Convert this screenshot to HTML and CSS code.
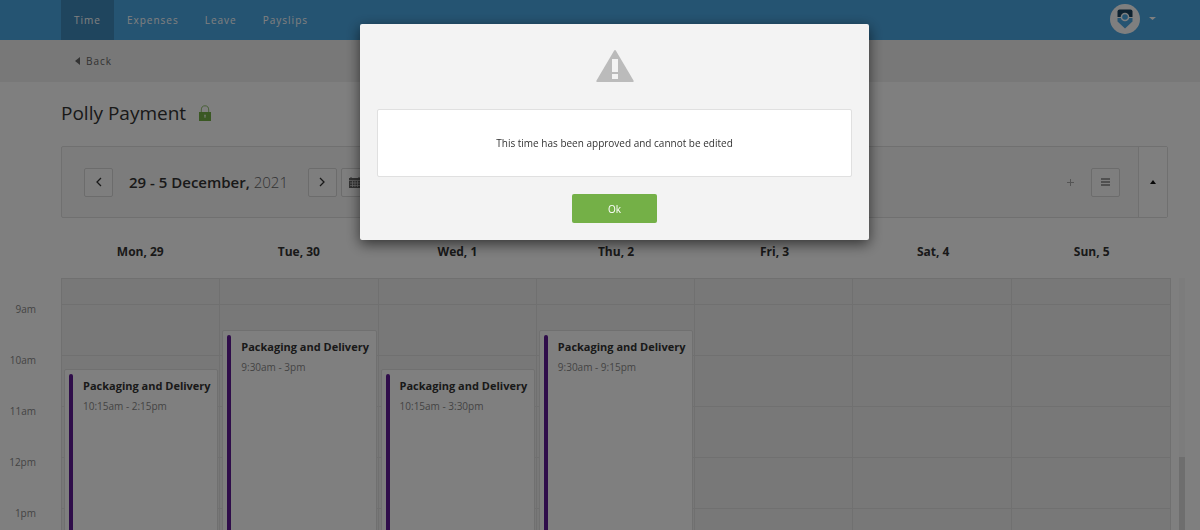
FILE: index.html
```
<!DOCTYPE html>
<html lang="en">
<head>
    <meta charset="UTF-8">
    <meta name="viewport" content="width=device-width, initial-scale=1.0">
    <title>Timesheet - Polly Payment</title>
    <link rel="stylesheet" href="styles.css">
</head>
<body>
    <header class="topbar">
        <nav class="nav">
            <a href="#" class="nav-link active">Time</a>
            <a href="#" class="nav-link">Expenses</a>
            <a href="#" class="nav-link">Leave</a>
            <a href="#" class="nav-link">Payslips</a>
        </nav>
        <button class="account" type="button" aria-label="Account menu">
            <svg class="avatar" viewBox="0 0 30 30" aria-hidden="true">
                <circle cx="15" cy="15" r="15" fill="#fff"/>
                <path d="M7.500 13V7.500q0-2 2-2h11q2 0 2 2V13z" fill="#1c4560"/>
                <path d="M7.500 14h15v3.500L15 24.500l-7.500-7z" fill="#4ba8e4"/>
                <circle cx="15" cy="13" r="4.300" fill="#fff"/>
                <circle cx="15" cy="13" r="2.800" fill="#4ba8e4"/>
            </svg>
            <svg class="caret" viewBox="0 0 7 3" aria-hidden="true"><path d="M0 0h7L3.500 3z" fill="#fff"/></svg>
        </button>
    </header>

    <div class="subbar">
        <a href="#" class="back">
            <svg viewBox="0 0 5 8" aria-hidden="true"><path d="M5 0v8L0 4z" fill="currentColor"/></svg>
            Back
        </a>
    </div>

    <main class="page">
        <div class="title-row">
            <h1>Polly Payment</h1>
            <svg class="lock" viewBox="0 0 12 16" aria-label="Approved" role="img">
                <path d="M2.300 7.500V5a3.700 4.200 0 0 1 7.400 0v2.500" fill="none" stroke="#74b047" stroke-width=".8"/>
                <rect y="7" width="12" height="9" fill="#74b047"/>
                <path d="M6 9.500a1.200 1.200 0 0 1 .5 2.200V13H5.500v-1.300A1.200 1.200 0 0 1 6 9.500z" fill="#d5e7c8"/>
            </svg>
        </div>

        <!-- Week picker -->
        <section class="toolbar">
            <div class="toolbar-main">
                <button class="square" type="button" aria-label="Previous week">
                    <svg width="6" height="10" viewBox="0 0 6 10"><path d="M5 1L1 5l4 4" fill="none" stroke="#333" stroke-width="1.300"/></svg>
                </button>
                <h2 class="range">29 - 5 December, <span>2021</span></h2>
                <button class="square" type="button" aria-label="Next week">
                    <svg width="6" height="10" viewBox="0 0 6 10"><path d="M1 1l4 4-4 4" fill="none" stroke="#333" stroke-width="1.300"/></svg>
                </button>
                <button class="square calendar-button" type="button" aria-label="Pick a date">
                    <svg width="12" height="11" viewBox="0 0 12 11">
                        <path d="M0 1h12v10H0z" fill="#666"/>
                        <path d="M2 0v2M10 0v2" stroke="#666"/>
                        <path d="M0 3.500h12M1 6h10M1 8.500h10M3.500 4v6M6 4v6M8.500 4v6" stroke="#ddd" stroke-width=".7"/>
                    </svg>
                </button>
                <button class="square plain" type="button" aria-label="Add time">
                    <svg width="9" height="9" viewBox="0 0 9 9"><path d="M4.500 1v7M1 4.500h7" stroke="#aaa" stroke-width="1"/></svg>
                </button>
                <button class="square" type="button" aria-label="List view">
                    <svg width="9" height="8" viewBox="0 0 9 8"><path d="M0 1h9M0 4h9M0 7h9" stroke="#444" stroke-width="1"/></svg>
                </button>
            </div>
            <button class="collapse" type="button" aria-label="Collapse">
                <svg width="6" height="4" viewBox="0 0 6 4"><path d="M3 0l3 4H0z" fill="#111"/></svg>
            </button>
        </section>
    </main>

    <div class="days">
        <span>Mon, 29</span>
        <span>Tue, 30</span>
        <span>Wed, 1</span>
        <span>Thu, 2</span>
        <span>Fri, 3</span>
        <span>Sat, 4</span>
        <span>Sun, 5</span>
    </div>

    <section class="calendar">
        <div class="hours">
            <span>9am</span>
            <span>10am</span>
            <span>11am</span>
            <span>12pm</span>
            <span>1pm</span>
        </div>
        <div class="week">
            <div class="day">
                <article class="event from-1015">
                    <h3>Packaging and Delivery</h3>
                    <p>10:15am - 2:15pm</p>
                </article>
            </div>
            <div class="day">
                <article class="event from-0930">
                    <h3>Packaging and Delivery</h3>
                    <p>9:30am - 3pm</p>
                </article>
            </div>
            <div class="day">
                <article class="event from-1015">
                    <h3>Packaging and Delivery</h3>
                    <p>10:15am - 3:30pm</p>
                </article>
            </div>
            <div class="day">
                <article class="event from-0930">
                    <h3>Packaging and Delivery</h3>
                    <p>9:30am - 9:15pm</p>
                </article>
            </div>
            <div class="day"></div>
            <div class="day"></div>
            <div class="day"></div>
        </div>
        <div class="scrollbar"><div class="thumb"></div></div>
    </section>

    <!-- Approved time warning -->
    <div class="overlay">
        <div class="modal" role="alertdialog" aria-modal="true" aria-describedby="modal-message">
            <svg class="warning" viewBox="0 0 38 32" aria-hidden="true">
                <path d="M18.200.5q.8-1 1.600 0L37.500 30.500q.5 1.500-1 1.500H1.500Q0 32 .5 30.500z" fill="#bbb"/>
                <path d="M16 9h6v13h-6zM16 24h6v5h-6z" fill="#f3f3f3"/>
            </svg>
            <p class="message" id="modal-message">This time has been approved and cannot be edited</p>
            <button class="ok" type="button">Ok</button>
        </div>
    </div>
</body>
</html>
```
FILE: styles.css
```
:root {
    --blue: #4ba8e4;
    --blue-dark: #3e8abd;
    --green: #74b047;
    --purple: #5e1a94;
    --grey: #f0f0f0;
    --line: #e0e0e0;
    --gutter-left: 61px;
    --gutter-right: 32px;
    --hour: 51px;
}

* {
    margin: 0;
    padding: 0;
    box-sizing: border-box;
}

body {
    height: 100vh;
    display: flex;
    flex-direction: column;
    overflow: hidden;
    background: #fff;
    color: #333;
    font-family: "Open Sans", sans-serif;
    font-size: 11px;
}

button {
    font: inherit;
    cursor: pointer;
}

a {
    color: inherit;
    text-decoration: none;
}

svg {
    display: block;
}

/* Header */
.topbar {
    height: 40px;
    flex: none;
    display: flex;
    justify-content: space-between;
    padding: 0 44px 0 var(--gutter-left);
    background: var(--blue);
}

.nav {
    display: flex;
}

.nav-link {
    padding: 0 13px;
    font-size: 10px;
    line-height: 40px;
    letter-spacing: 1px;
    color: #fff;
}

.nav-link.active {
    background: var(--blue-dark);
}

.account {
    display: flex;
    align-items: center;
    gap: 9px;
    padding-bottom: 3px;
    border: 0;
    background: none;
}

.avatar {
    width: 30px;
    height: 30px;
}

.caret {
    width: 7px;
    height: 3px;
}

.subbar {
    height: 42px;
    flex: none;
    display: flex;
    align-items: center;
    padding-left: 75px;
    background: var(--grey);
}

.back {
    display: flex;
    align-items: center;
    gap: 6px;
    font-size: 10px;
    letter-spacing: 1px;
    color: #666;
}

.back svg {
    width: 5px;
    height: 8px;
}

.page {
    flex: none;
    padding: 0 var(--gutter-right) 0 var(--gutter-left);
}

.title-row {
    height: 64px;
    display: flex;
    align-items: center;
    gap: 13px;
    padding-bottom: 2px;
}

.title-row h1 {
    font-size: 19px;
    font-weight: 400;
}

.lock {
    width: 12px;
    height: 16px;
}

/* Toolbar */
.toolbar {
    height: 72px;
    display: flex;
    border: 1px solid var(--line);
    border-radius: 2px;
    background: #f8f8f8;
}

.toolbar-main {
    flex: 1;
    display: flex;
    align-items: center;
    padding: 0 18px 0 22px;
}

.square {
    width: 29px;
    height: 29px;
    display: grid;
    place-items: center;
    border: 1px solid #d8d8d8;
    border-radius: 2px;
    background: #fdfdfd;
}

.square.plain {
    margin: 0 6px 0 auto;
    border-color: transparent;
    background: none;
}

.calendar-button {
    margin-left: 4px;
}

.range {
    margin: 0 20px 0 16px;
    font-size: 15px;
    font-weight: 600;
}

.range span {
    font-weight: 300;
    color: #666;
}

.collapse {
    width: 29px;
    display: grid;
    place-items: center;
    border: 0;
    border-left: 1px solid var(--line);
    background: #fff;
}

/* Calendar */
.days {
    flex: none;
    display: grid;
    grid-template-columns: repeat(7, 1fr);
    padding: 24px 29px 16px var(--gutter-left);
    font-size: 12px;
    font-weight: 700;
    line-height: 20px;
    text-align: center;
}

.calendar {
    flex: 1;
    min-height: 0;
    display: flex;
    padding-right: 15px;
    overflow: hidden;
}

.hours {
    width: var(--gutter-left);
    display: flex;
    flex-direction: column;
    padding: 6px 25px 0 0;
    text-align: right;
    font-size: 10px;
    color: #888;
}

.hours span {
    height: var(--hour);
    flex: none;
    line-height: var(--hour);
}

.week {
    flex: 1;
    display: grid;
    grid-template-columns: repeat(7, 1fr);
    border: 1px solid var(--line);
    border-bottom: 0;
    background: repeating-linear-gradient(var(--line) 0 1px, var(--grey) 1px var(--hour)) 0 -26px;
    background-size: 100% 510px;
    overflow: hidden;
}

.day {
    min-width: 0;
    padding: 0 1px 0 2px;
    border-right: 1px solid var(--line);
}

.day:last-child {
    border-right: 0;
}

.event {
    height: 400px;
    position: relative;
    padding: 8px 4px 0 18px;
    border: 1px solid var(--line);
    border-radius: 2px;
    background: #fff;
    white-space: nowrap;
}

/* project colour strip */
.event::before {
    content: "";
    position: absolute;
    top: 4px;
    bottom: 4px;
    left: 4px;
    width: 4px;
    border-radius: 2px;
    background: var(--purple);
}

.from-0930 {
    margin-top: 51px;
}

.from-1015 {
    margin-top: 90px;
}

.event h3 {
    font-size: 11px;
    line-height: 16px;
}

.event p {
    margin-top: 4px;
    font-size: 10px;
    line-height: 16px;
    color: #888;
}

.scrollbar {
    width: 6px;
    margin-left: 8px;
    display: flex;
    align-items: flex-end;
    background: #f8f8f8;
}

.thumb {
    width: 100%;
    height: 29%;
    background: #dcdcdc;
}

/* Modal */
.overlay {
    position: fixed;
    inset: 0;
    padding: 24px var(--gutter-right) 0 var(--gutter-left);
    background: rgba(0, 0, 0, 0.5);
}

.modal {
    max-width: 509px;
    margin: 0 auto;
    display: flex;
    flex-direction: column;
    align-items: center;
    padding: 26px 17px 17px;
    border-radius: 2px;
    background: #f3f3f3;
    box-shadow: 0 4px 14px rgba(0, 0, 0, 0.6);
}

.warning {
    width: 38px;
    height: 32px;
}

.message {
    width: 100%;
    margin: 27px 0 17px;
    padding: 25px 16px;
    border: 1px solid var(--line);
    border-radius: 2px;
    background: #fff;
    font-size: 10px;
    line-height: 16px;
    text-align: center;
}

.ok {
    width: 85px;
    height: 29px;
    border: 0;
    border-radius: 2px;
    background: var(--green);
    color: #fff;
    font-size: 10px;
}
```
